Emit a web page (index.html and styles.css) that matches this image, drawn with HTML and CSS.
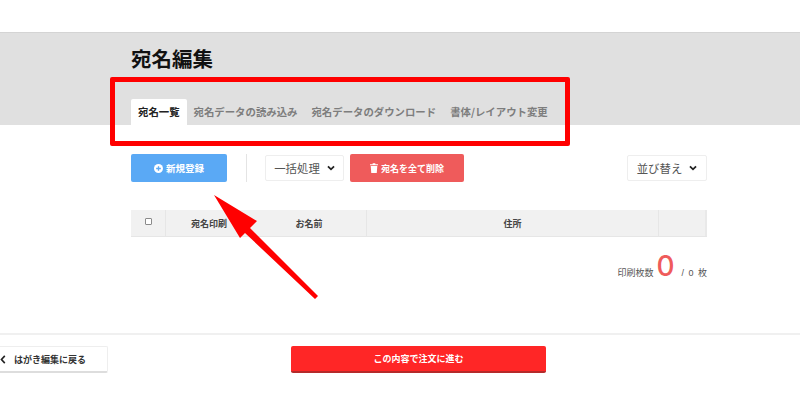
FILE: index.html
```html
<!DOCTYPE html>
<html lang="ja">
<head>
<meta charset="utf-8">
<title>宛名編集</title>
<link rel="stylesheet" href="styles.css">
</head>
<body>
<header class="band">
  <h1 class="title">宛名編集</h1>
  <nav class="tabs">
    <a class="tab tab-active">宛名一覧</a>
    <a class="tab">宛名データの読み込み</a>
    <a class="tab">宛名データのダウンロード</a>
    <a class="tab">書体/レイアウト変更</a>
  </nav>
</header>
<main class="content">
  <div class="toolbar">
    <button class="btn btn-blue">
      <svg class="ico" viewBox="0 0 10 10" width="9" height="9"><circle cx="5" cy="5" r="5" fill="#fff"/><path d="M5 2.4v5.2M2.4 5h5.2" stroke="#5aa9f5" stroke-width="1.5"/></svg>
      <span class="btn-label-lg">新規登録</span>
    </button>
    <span class="divider"></span>
    <button class="select select-bulk">一括処理
      <svg class="chev" viewBox="0 0 10 7" width="8" height="6"><path d="M1.2 1.4 5 5.2l3.8-3.8" fill="none" stroke="#222" stroke-width="2.2"/></svg>
    </button>
    <button class="btn btn-red">
      <svg class="ico" viewBox="0 0 9 11" width="8" height="10"><path d="M0 1.2h3V.2h3v1h3v1.3H0zM.8 3.2h7.4L7.6 11H1.4z" fill="#fff"/></svg>
      宛名を全て削除
    </button>
    <button class="select select-sort">並び替え
      <svg class="chev" viewBox="0 0 10 7" width="8" height="6"><path d="M1.2 1.4 5 5.2l3.8-3.8" fill="none" stroke="#222" stroke-width="2.2"/></svg>
    </button>
  </div>
  <div class="thead">
    <div class="th th-check"><span class="checkbox"></span></div>
    <div class="th th-print">宛名印刷</div>
    <div class="th th-name">お名前</div>
    <div class="th th-addr">住所</div>
    <div class="th th-last"></div>
  </div>
  <div class="count">
    <span class="count-label">印刷枚数</span>
    <span class="count-num">0</span>
    <span class="count-total">/ 0 枚</span>
  </div>
</main>
<footer class="foot">
  <button class="back">
    <svg class="back-chev" viewBox="0 0 6 10" width="6" height="9"><path d="M5 1 1.3 5 5 9" fill="none" stroke="#222" stroke-width="1.8"/></svg>
    はがき編集に戻る
  </button>
  <button class="order">この内容で注文に進む</button>
</footer>
<div class="highlight"></div>
<svg class="arrow" viewBox="0 0 800 400" width="800" height="400">
  <path d="M214 195 257 221 250 228 318 296 315 299 245 233 240 238Z" fill="#ff0000"/>
</svg>
</body>
</html>
```
FILE: styles.css
```css
* { box-sizing: border-box; }
html, body { margin: 0; padding: 0; }
body {
  width: 800px;
  height: 400px;
  overflow: hidden;
  position: relative;
  background: #fff;
  color: #333;
  font-family: "Liberation Sans", "Noto Sans CJK JP", sans-serif;
}
button { font-family: inherit; cursor: pointer; }
.band {
  margin-top: 32px;
  height: 93px;
  padding: 0 0 0 131px;
  background: #e0e0e0;
  border-top: 1px solid #d4d4d4;
  display: flex;
  flex-direction: column;
  justify-content: flex-end;
}
.title {
  margin: 0 0 24px;
  font-size: 20.5px;
  line-height: 30px;
  font-weight: 700;
  color: #111;
}
.tabs { display: flex; }
.tab {
  height: 26px;
  line-height: 26px;
  padding: 0 7px;
  font-family: "Noto Sans CJK JP", sans-serif;
  font-size: 10.4px;
  font-weight: 700;
  color: #7d7d7d;
}
.tab-active {
  background: #fff;
  color: #222;
  border-radius: 2px 2px 0 0;
}
.content {
  padding: 29px 93px 0 131px;
}
.toolbar {
  display: flex;
  align-items: center;
  height: 28px;
}
.btn {
  height: 28px;
  border: 0;
  border-radius: 2px;
  color: #fff;
  font-size: 9px;
  font-weight: 700;
  display: flex;
  align-items: center;
  justify-content: center;
  gap: 3px;
  padding: 0;
}
.btn-label-lg { font-size: 9.5px; }
.btn-blue { width: 96px; background: #5aa9f5; }
.btn-red { width: 114px; background: #ef5b5b; }
.divider {
  width: 1px;
  height: 28px;
  margin: 0 18px 0 19px;
  background: #e4e4e4;
}
.select {
  height: 26px;
  background: #fff;
  border: 1px solid #eee;
  border-radius: 2px;
  color: #555;
  font-size: 11.4px;
  display: flex;
  align-items: center;
  justify-content: center;
  gap: 7px;
  padding: 0;
}
.select-bulk { width: 79px; margin-right: 6px; }
.select-sort { width: 80px; margin-left: auto; }
.thead {
  margin-top: 28px;
  height: 27px;
  display: flex;
  background: #f1f1f1;
  border-bottom: 1px solid #e6e6e6;
  font-size: 9px;
  font-weight: 700;
  color: #444;
}
.th {
  display: flex;
  align-items: center;
  justify-content: center;
  border-right: 1px solid #e6e6e6;
}
.th-check { width: 35px; padding-bottom: 3px; }
.th-print { width: 86px; border-right: 0; }
.th-name { width: 115px; }
.th-addr { width: 292px; }
.th-last { width: 48px; border-right: 2px solid #e9e9e9; }
.checkbox {
  width: 7px;
  height: 7px;
  background: #fff;
  border: 1px solid #8a8a8a;
  border-radius: 1px;
}
.count {
  margin-top: 12px;
  height: 34px;
  display: flex;
  align-items: baseline;
  justify-content: flex-end;
  font-size: 9px;
  color: #555;
}
.count-num {
  margin: 0 7px 0 3px;
  font-family: Inter, "Liberation Sans", sans-serif;
  font-weight: 500;
  font-size: 28px;
  line-height: 34px;
  color: #ef5b5b;
}
.count-total { word-spacing: 2px; }
.foot {
  position: absolute;
  left: 0;
  right: 0;
  top: 333px;
  height: 67px;
  border-top: 2px solid #f0f0f0;
  padding-top: 11px;
  display: flex;
  align-items: flex-start;
}
.back {
  width: 108px;
  height: 27px;
  background: #fff;
  border: 1px solid #eee;
  border-left: 0;
  border-bottom: 2px solid #ddd;
  border-radius: 0 2px 2px 0;
  display: flex;
  align-items: center;
  gap: 8px;
  padding: 0;
  font-size: 9px;
  font-weight: 700;
  color: #333;
}
.order {
  width: 255px;
  height: 27px;
  margin-left: 183px;
  background: #ff2626;
  border: 0;
  border-bottom: 2px solid #b52a2a;
  border-radius: 2px;
  color: #fff;
  font-size: 9px;
  font-weight: 700;
  padding: 0;
}
.highlight {
  position: absolute;
  left: 110px;
  top: 77px;
  width: 460px;
  height: 69px;
  border: 5px solid #ff0000;
  border-radius: 2px;
}
.arrow {
  position: absolute;
  left: 0;
  top: 0;
  pointer-events: none;
}
```
